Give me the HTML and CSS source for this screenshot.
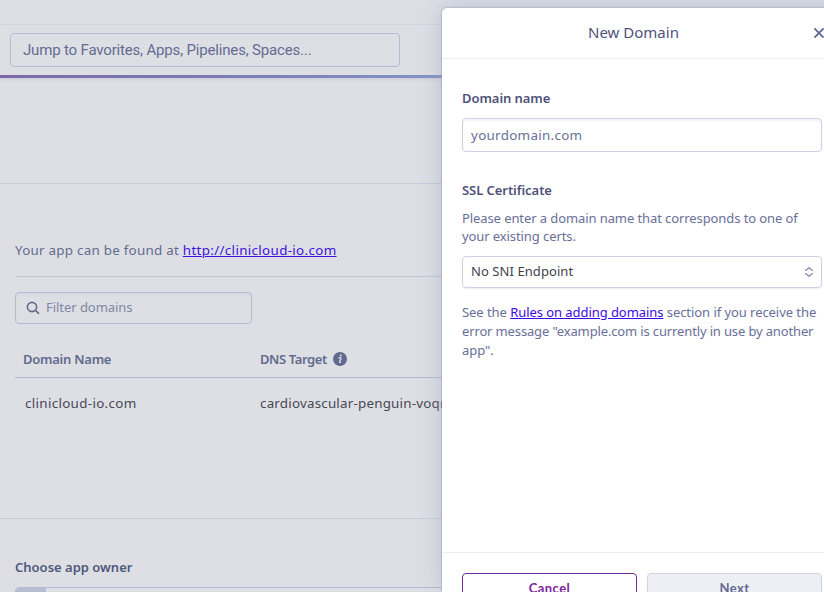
FILE: index.html
```html
<!DOCTYPE html>
<html lang="en">
<head>
<meta charset="utf-8">
<title>New Domain</title>
<link rel="stylesheet" href="styles.css">
</head>
<body>
<main class="page">
  <div class="topbar"></div>
  <header class="jumpbar"><div class="jump">Jump to Favorites, Apps, Pipelines, Spaces...</div></header>
  <div class="banner"></div>
  <section class="domains">
    <p class="found"><span class="found-text">Your app can be found at</span> <a href="#">http://clinicloud-io.com</a></p>
    <div class="filter">
      <svg width="14" height="14" viewBox="0 0 14 14" fill="none" stroke="#626a8c" stroke-width="1.6" stroke-linecap="round"><circle cx="6" cy="6" r="4.6"/><path d="M9.4 9.4L12.6 12.3"/></svg>
      <span class="filter-text">Filter domains</span>
    </div>
    <div class="row head">
      <div class="name">Domain Name</div>
      <div class="target"><span class="dns">DNS Target</span>
        <svg width="14" height="14" viewBox="0 0 14 14"><circle cx="7" cy="7" r="7" fill="#626a8e"/><circle cx="7.8" cy="3.5" r="1.1" fill="#dedfe5"/><path d="M5.3 5.9h2.6L6.8 10.3h1.1" fill="none" stroke="#dedfe5" stroke-width="1.4"/></svg>
      </div>
    </div>
    <div class="row item">
      <div class="name">clinicloud-io.com</div>
      <div class="target">cardiovascular-penguin-voqr</div>
    </div>
  </section>
  <section class="owner">
    <h2>Choose app owner</h2>
    <div class="picker"><div class="picker-icon"></div></div>
  </section>
</main>
<aside class="drawer">
  <header class="drawer-head">
    <h1>New Domain</h1>
    <svg class="close" width="12" height="12" viewBox="0 0 12 12" fill="none" stroke="#626a94" stroke-width="1.9"><path d="M1.4 1.4L10.6 10.6M10.6 1.4L1.4 10.6"/></svg>
  </header>
  <div class="drawer-body">
    <h3>Domain name</h3>
    <div class="input">yourdomain.com</div>
    <h3 class="ssl">SSL Certificate</h3>
    <p class="hint">Please enter a domain name that corresponds to one of<br>your existing certs.</p>
    <div class="select"><span class="select-text">No SNI Endpoint</span>
      <svg width="8" height="10" viewBox="0 0 8 10" fill="none" stroke="#8f96b4" stroke-width="1.4" stroke-linecap="round" stroke-linejoin="round"><path d="M.8 3.4L4 .8L7.2 3.4M.8 6.6L4 9.2L7.2 6.6"/></svg>
    </div>
    <p class="note">See the <a href="#">Rules on adding domains</a> section if you receive the<br><span class="tight">error message "example.com is currently in use by another</span><br>app".</p>
  </div>
  <footer class="drawer-foot">
    <div class="btn cancel">Cancel</div>
    <div class="btn next">Next</div>
  </footer>
</aside>
</body>
</html>
```
FILE: styles.css
```css
* { box-sizing: border-box; }
html, body { margin: 0; height: 592px; overflow: hidden; }
body { position: relative; background: #dedfe5; font: 13px/18px "Noto Sans", sans-serif; color: #636b8d; }
h1, h2, h3, p { margin: 0; }
a { color: #3f12dc; text-underline-offset: 1px; }
.page { height: 592px; overflow: hidden; }
.topbar { height: 25px; border-bottom: 1px solid #d2d4df; }
.jumpbar { height: 53px; padding: 8px 10px 0; border-bottom: 3px solid; border-image: linear-gradient(90deg, #7c68ab, #7d80b9 270px, #8294c8 442px) 1; box-shadow: 0 2px 3px #cfd0d9; }
.jump { width: 390px; height: 34px; border: 1px solid #b8bbd7; border-radius: 4px; padding: 0 12px; font: 15px/32px Roboto, sans-serif; color: #636b92; letter-spacing: -.17px; }
.banner { height: 106px; border-bottom: 1px solid #c9cbdb; }
.domains { height: 335px; padding: 56px 0 0 15px; border-bottom: 1px solid #c9cbdb; }
.found { height: 37px; border-bottom: 1px solid #c3c6d9; font-size: 13.4px; line-height: 21px; letter-spacing: .25px; }
.found a { letter-spacing: .33px; }
.filter { display: flex; align-items: center; gap: 6px; width: 237px; height: 32px; margin-top: 15px; padding: 0 0 1px 10px; border: 1px solid #b5bad3; border-radius: 4px; box-shadow: inset 0 2px 2px #d6d9e4; color: #8086a3; letter-spacing: -.05px; }
.filter-text { padding-bottom: 2px; }
.row { display: grid; grid-template-columns: 237px 1fr; align-items: start; padding-left: 8px; }
.head { height: 54px; padding-top: 26px; border-bottom: 1px solid #b5b8d2; font-weight: 600; color: #626a8c; letter-spacing: -.25px; }
.dns { letter-spacing: -.4px; }
.target { display: flex; align-items: center; gap: 6px; white-space: nowrap; }
.item { padding: 16px 0 0 10px; grid-template-columns: 235px 1fr; font-size: 13.4px; line-height: 19px; letter-spacing: .32px; color: #474853; }
.item .target { letter-spacing: .2px; }
.owner { padding: 39px 0 0 15px; }
.owner h2 { font-size: 13px; line-height: 18px; font-weight: 600; color: #50587b; }
.picker { height: 34px; margin-top: 11px; border: 1px solid #b5b8d2; border-radius: 4px; overflow: hidden; }
.picker-icon { width: 30px; height: 34px; background: #b7bdd3; }
.drawer { position: absolute; left: 442px; top: 8px; width: 400px; height: 584px; overflow: hidden; background: #fff; border-radius: 5px 0 0 0; box-shadow: 0 0 2px #858eac, 0 0 22px rgba(144,158,187,.5); }
.drawer-head { display: flex; align-items: center; height: 51px; padding: 0 17px 1px 0; border-bottom: 1px solid #ececf1; }
.drawer-head h1 { flex: 1; padding: 0 0 2px 12px; text-align: center; font-size: 15px; line-height: 20px; font-weight: 400; color: #50527a; }
.drawer-body { height: 493px; padding: 30px 20px 0; }
h3 { font-size: 13px; line-height: 18px; font-weight: 600; color: #50527a; letter-spacing: -.06px; }
.input { width: 360px; height: 34px; margin-top: 11px; padding: 0 8px; border: 1px solid #cfd0e8; border-radius: 4px; box-shadow: inset 0 2px 2px #f2f3f8; font-size: 13.4px; letter-spacing: .3px; line-height: 32px; color: #696f98; }
.ssl { margin-top: 29px; }
.hint { margin-top: 10px; color: #696f98; letter-spacing: -.09px; }
.select { display: flex; align-items: center; justify-content: space-between; width: 360px; height: 32px; margin-top: 11px; padding: 0 8px 1px; border: 1px solid #cfd0e8; border-radius: 4px; box-shadow: 0 1px 1px #eeeff6; color: #3f3f4e; letter-spacing: .07px; }
.select-text { padding-bottom: 2px; }
.note { margin-top: 15px; line-height: 19px; color: #696f98; letter-spacing: -.06px; }
.tight { letter-spacing: -.14px; }
.note a { color: #3e09e6; }
.drawer-foot { display: flex; gap: 10px; padding: 20px; border-top: 1px solid #ececf1; }
.btn { width: 175px; height: 34px; border-radius: 4px; text-align: center; font: 700 13px/29px Lato, sans-serif; letter-spacing: .4px; }
.cancel { border: 1px solid #79269b; color: #79269b; }
.next { border: 1px solid #d0d0e7; background: #eeeef5; color: #626a94; }
```
